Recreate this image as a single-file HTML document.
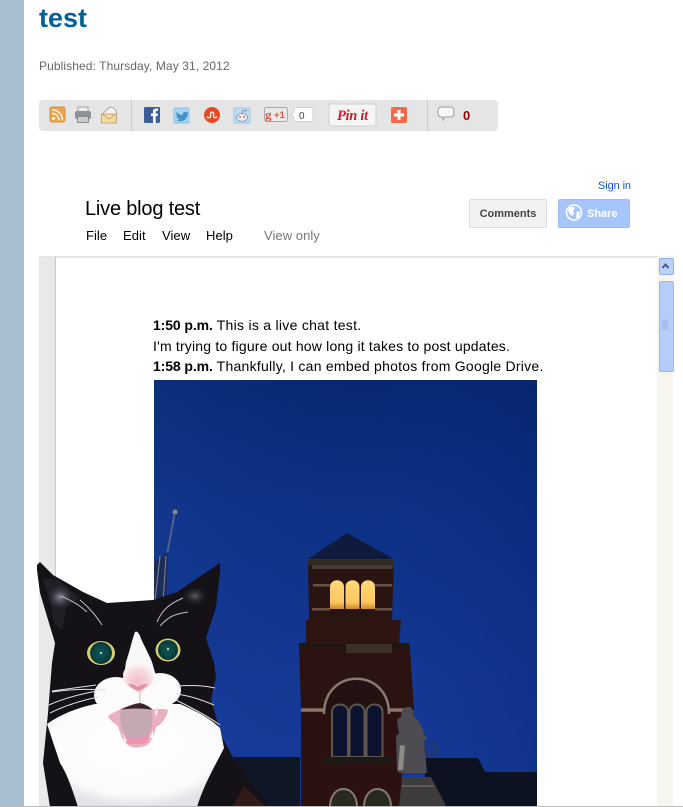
<!DOCTYPE html>
<html><head><meta charset="utf-8"><style>
html,body{margin:0;padding:0;background:#fff}
body{width:683px;height:807px;position:relative;overflow:hidden;font-family:"Liberation Sans",Arial,sans-serif}
.t{position:absolute;white-space:nowrap;line-height:1}
svg{position:absolute;left:0;top:0}
b{letter-spacing:-.1px}
</style></head><body>
<div style="position:absolute;left:0;top:0;width:24px;height:807px;background:#a7bfd0"></div>
<div class="t" style="left:39px;top:5px;font-size:27px;font-weight:bold;color:#036097">test</div>
<div class="t" style="left:39px;top:60px;font-size:12px;color:#666;letter-spacing:.09px">Published: Thursday, May 31, 2012</div>

<div style="position:absolute;left:39px;top:100px;width:459px;height:31px;background:#e5e5e5;border-radius:4px"></div>
<div style="position:absolute;left:131px;top:100px;width:1px;height:31px;background:#c8c8c8"></div>
<div style="position:absolute;left:427px;top:100px;width:1px;height:31px;background:#c8c8c8"></div>

<div class="t" style="left:85px;top:199px;font-size:20px;color:#000;letter-spacing:-.2px">Live blog test</div>
<div class="t" style="left:86px;top:229px;font-size:13px;color:#000;letter-spacing:.05px">File</div>
<div class="t" style="left:123px;top:229px;font-size:13px;color:#000;letter-spacing:.05px">Edit</div>
<div class="t" style="left:162px;top:229px;font-size:13px;color:#000;letter-spacing:.05px">View</div>
<div class="t" style="left:206px;top:229px;font-size:13px;color:#000;letter-spacing:.05px">Help</div>
<div class="t" style="left:264px;top:229px;font-size:13px;color:#777;letter-spacing:.05px">View only</div>
<div class="t" style="left:598px;top:181px;font-size:11px;color:#15c;letter-spacing:-.1px">Sign in</div>
<div style="position:absolute;left:469px;top:199px;width:76px;height:27px;background:#f2f2f2;border:1px solid #dcdcdc;border-radius:2px;text-align:center;font-size:11px;font-weight:bold;color:#444;line-height:28px">Comments</div>
<div style="position:absolute;left:558px;top:199px;width:70px;height:27px;background:#a6c5fb;border:1px solid #9dbdf5;border-radius:2px;font-size:11px;font-weight:bold;color:#fff;line-height:28px;text-indent:28px">Share</div>

<!-- doc -->
<div style="position:absolute;left:39px;top:256px;width:618px;height:2px;background:#e4e4e4"></div>
<div style="position:absolute;left:39px;top:257px;width:16px;height:550px;background:#e9e9e9;border-right:1px solid #c9c9c9"></div>
<div style="position:absolute;left:657px;top:256px;width:16px;height:551px;background:#f6f5f0"></div>
<div style="position:absolute;left:659px;top:258px;width:13px;height:15px;background:#bcd2fa;border:1px solid #8fb0ec;border-radius:2px"></div>
<div style="position:absolute;left:659px;top:281px;width:13px;height:89px;background:#b4cdf9;border:1px solid #98b7f0;border-radius:2px"></div>

<div class="t" style="left:153px;top:318px;font-size:14px;color:#000;letter-spacing:.28px"><b>1:50 p.m.</b> This is a live chat test.</div>
<div class="t" style="left:153px;top:339px;font-size:14px;color:#000;letter-spacing:.19px">I'm trying to figure out how long it takes to post updates.</div>
<div class="t" style="left:153px;top:359px;font-size:14px;color:#000;letter-spacing:.245px"><b>1:58 p.m.</b> Thankfully, I can embed photos from Google Drive.</div>

<svg width="683" height="807" viewBox="0 0 683 807">
<defs>
<linearGradient id="sky" x1="0" y1="0" x2="0" y2="1"><stop offset="0" stop-color="#082870"/><stop offset=".3" stop-color="#0d3184"/><stop offset=".7" stop-color="#143894"/><stop offset="1" stop-color="#173c98"/></linearGradient>
<linearGradient id="skyr" x1="0" y1="0" x2="1" y2="0"><stop offset="0" stop-color="#2a55b5" stop-opacity=".15"/><stop offset=".55" stop-color="#0a2f8a" stop-opacity="0"/><stop offset="1" stop-color="#04206e" stop-opacity=".3"/></linearGradient>
<radialGradient id="ear" cx=".5" cy=".5" r=".5"><stop offset="0" stop-color="#8f8a9a"/><stop offset="1" stop-color="#2a252c" stop-opacity="0"/></radialGradient>
<radialGradient id="iris" cx=".5" cy=".5" r=".5"><stop offset="0" stop-color="#0e5a5a"/><stop offset="1" stop-color="#0a3836"/></radialGradient>
<radialGradient id="fur" cx=".5" cy=".4" r=".6"><stop offset="0" stop-color="#fff"/><stop offset=".8" stop-color="#fbfbfb"/><stop offset="1" stop-color="#e2e2e8"/></radialGradient>
<radialGradient id="nose" cx=".5" cy=".6" r=".55"><stop offset="0" stop-color="#f3bccb"/><stop offset=".7" stop-color="#f8dbe0"/><stop offset="1" stop-color="#fbf3f3"/></radialGradient>
<linearGradient id="win" x1="0" y1="0" x2="0" y2="1"><stop offset="0" stop-color="#ffd77a"/><stop offset=".75" stop-color="#ffc95e"/><stop offset="1" stop-color="#d08a2c"/></linearGradient>
</defs>

<!-- toolbar icons -->
<g>
<rect x="50" y="107" width="15" height="15" rx="2" fill="#e9a24e" stroke="#d8923f"/>
<circle cx="53.500" cy="118.500" r="1.600" fill="#fff3dd"/>
<path d="M52 113.500a7 7 0 0 1 7 7M52 109.800a10.500 10.500 0 0 1 10.500 10.500" fill="none" stroke="#fff0d6" stroke-width="1.600"/>
<rect x="78" y="107" width="10" height="5" fill="#eee" stroke="#a0a0a0"/>
<rect x="75" y="111" width="16" height="8" rx="2" fill="#8c9299"/>
<rect x="77.500" y="116.500" width="11" height="6" fill="#c8cacc" stroke="#8c8c8c"/>
<path d="M101.500 115l7.500-7.500h4l3.500 4v3.500l-7 4z" fill="#f4f4f4" stroke="#aaa"/>
<rect x="101.500" y="114" width="15" height="9" fill="#f2d9a6" stroke="#c9a671"/>
<path d="M102 114l7 5 7-5" fill="none" stroke="#c9a671"/>
<rect x="144" y="107" width="16" height="16" rx="1.500" fill="#3b5d98"/>
<path d="M153 123v-7h-2v-2.500h2v-2c0-2 1.200-3 3-3h2v2.500h-1.300c-.8 0-1 .4-1 1v1.500h2.300l-.4 2.500h-1.900v7z" fill="#fff"/>
<rect x="174" y="108" width="15" height="15" rx="1.500" fill="#a9d4ef" stroke="#8fbfe0"/>
<path d="M176.500 112c2 2 4 3 6 3 0-3 3-4 4.500-2.300l1.500-.7-.8 1.700c0 4-3 7.500-7.200 7.500-1.500 0-3-.4-4-1.200 1.300 0 2.300-.4 3.200-1-1.500-.5-2.500-1-3.500-2.500l1.500-.2c-1-.8-1.800-2.300-1.200-4.300z" fill="#3f93c9"/>
<circle cx="212" cy="115" r="8" fill="#eb4924"/>
<path d="M207 116.500c.2 1.500 3.200 1.500 3.600 0v-3c.2-1.800 2.700-1.800 3 0v3c.3 1.500 2.800 1.500 3 0" fill="none" stroke="#fff" stroke-width="1.300"/>
<rect x="234" y="108" width="16" height="15" rx="1.500" fill="#bcdcf3" stroke="#a0c6e4"/>
<ellipse cx="242" cy="117.500" rx="5.500" ry="3.800" fill="#e9eef2" stroke="#7b8a96" stroke-width=".7"/>
<circle cx="240" cy="117" r=".9" fill="#d8431e"/><circle cx="244" cy="117" r=".9" fill="#d8431e"/>
<circle cx="246" cy="110.500" r="1" fill="#8397a5"/><path d="M242 114l1-3.500 3 .3" fill="none" stroke="#6b7d8a" stroke-width=".7"/>
<rect x="264.500" y="107.500" width="23" height="14" rx="2" fill="#e9e9e9" stroke="#aaa"/>
<text x="265" y="119" font-family="Liberation Serif,serif" font-size="13" font-weight="bold" fill="#d9573f">g</text>
<text x="274" y="118" font-family="Liberation Sans,sans-serif" font-size="9.500" font-weight="bold" fill="#d9573f">+1</text>
<path d="M291 114.500l3-2.500v-3.500a1 1 0 0 1 1-1h17a1 1 0 0 1 1 1v12a1 1 0 0 1-1 1h-17a1 1 0 0 1-1-1v-3.500z" fill="#fff" stroke="#d0d0d0"/>
<text x="299" y="119" font-family="Liberation Sans,sans-serif" font-size="10" fill="#444">0</text>
<rect x="329" y="104" width="47" height="22" rx="2" fill="#f6f5f5" stroke="#cfcfcf"/>
<text x="337" y="120" font-family="Liberation Serif,serif" font-size="14.500" font-style="italic" font-weight="bold" fill="#c4202e" letter-spacing="-.3">Pin it</text>
<rect x="391" y="107" width="16" height="16" rx="1.500" fill="#f26b47"/>
<path d="M399 110v10M394 115h10" stroke="#fff" stroke-width="3"/>
<path d="M441 107h10a3 3 0 0 1 3 3v4a3 3 0 0 1-3 3h-6l-2 3v-3h-2a3 3 0 0 1-3-3v-4a3 3 0 0 1 3-3z" fill="#f8f8f8" stroke="#9a9a9a"/>
<text x="463" y="120" font-family="Liberation Sans,sans-serif" font-size="13" font-weight="bold" fill="#990000">0</text>
</g>

<!-- share globe -->
<circle cx="574" cy="212.500" r="7.500" fill="#a6c5fb" stroke="#fff" stroke-width="1.500"/>
<path d="M568 209c3-3 5-3 7-1l-2 3 1 3-2 2-3-3zM577 211l3 1-1 5-3 1z" fill="#fff"/>
<!-- scrollbar glyphs -->
<path d="M662.500 268l3-3.500 3 3.500" fill="none" stroke="#3e5d90" stroke-width="2"/>
<path d="M662 321h6M662 323h6M662 325h6M662 327h6M662 329h6" stroke="#8fb0ea"/>

<!-- photo -->
<rect x="154" y="380" width="383" height="427" fill="url(#sky)"/>
<rect x="154" y="380" width="383" height="427" fill="url(#skyr)"/>
<!-- flagpole -->
<circle cx="175" cy="512" r="2.500" fill="#8c8a80"/>
<path d="M174.500 514l-7.500 41" stroke="#50608a" stroke-width="2"/>
<path d="M168 552l-2 52h-12v-42z" fill="#1d2c55"/>
<path d="M160 556l-5 44M166 556l-3 46" stroke="#6c7894" stroke-width="1.200"/>
<!-- roofs -->
<path d="M154 757h146v50H154z" fill="#0f1626"/>
<path d="M425 758h53l7 14h52v35H425z" fill="#0c1220"/>
<!-- tower -->
<path d="M347 533l-39 26h86z" fill="#101a3c"/>
<path d="M308 560h86l-2 60h-83z" fill="#2a1412"/>
<path d="M308 560h86v5h-86z" fill="#2f2a22"/>
<path d="M312 565h81v4h-81z" fill="#453a30"/>
<path d="M313 584h17v2.500h-17zM375 584h17v2.500h-17zM312 608h18v2.500h-18zM375 608h17v2.500h-17z" fill="#6a5245"/>
<path d="M306 620h95l-2 24H306z" fill="#2e1512"/>
<path d="M299 643h110l1 7 4 60H301z" fill="#2a1311"/>
<path d="M299 643h110v4H299z" fill="#1f1612"/>
<rect x="346" y="644" width="46" height="9" fill="#3b3026"/>
<path d="M301 706h100l1 101H301z" fill="#2b1211"/>
<path d="M301 710h22M390 710h14" stroke="#8a7668" stroke-width="3.500"/>
<path d="M324 714c0-47 65-47 65 0" fill="#241212" stroke="#8a7a70" stroke-width="2.500"/>
<path d="M332 757v-45c0-10 16-10 16 0v45zM349.500 757v-45c0-10 15-10 15 0v45zM366.500 757v-45c0-10 16-10 16 0v45z" fill="#0c1330" stroke="#5f564c" stroke-width="2"/>
<path d="M323 757h70v6h-70z" fill="#1d1a18"/>
<path d="M330 807c0-24 27-24 27 0z" fill="#29291f" stroke="#8a7a70" stroke-width="2"/>
<path d="M364 807c0-24 27-24 27 0z" fill="#29291f" stroke="#8a7a70" stroke-width="2"/>
<!-- windows -->
<path d="M330 609v-22c0-9 14-9 14 0v22z" fill="url(#win)"/>
<path d="M345.500 609v-22c0-9 14-9 14 0v22z" fill="url(#win)"/>
<path d="M361 609v-22c0-9 14-9 14 0v22z" fill="url(#win)"/>
<!-- statue -->
<path d="M407 707c4-1 7 2 6 7l1 3c5 3 8 10 11 19l2 3-3 2 3 32h-27l-3-2-1-36 3-1-2-14 5-4c-1-4 0-8 5-9z" fill="#4e4c50"/>
<path d="M400 745l-2 25h5l2-24z" fill="#8e8a86"/>
<circle cx="431" cy="749" r="6" fill="none" stroke="#2e3648" stroke-width="1.500"/>
<path d="M402 777h29l14 27v3h-46z" fill="#3e3c3c"/>
<path d="M402 785h32v2h-32z" fill="#5e5c5a"/>

<!-- cat -->
<path d="M37 565l3-3 13 13 30 17 24 11 46-3 24-8 43-29v10l-4 34-10 31 8 25 2 14-5 23 11 37 14 26 16 20 17 24H50l-7-44 5-50 4-50 3-20-15-50-3-23z" fill="#141217"/>
<path d="M42 578l8 22 4 24 8 6 4-22 14-10-22-18z" fill="#221e26"/>
<ellipse cx="60" cy="597" rx="14" ry="13" fill="url(#ear)"/>
<ellipse cx="195" cy="596" rx="13" ry="10" fill="url(#ear)" opacity=".6"/>
<path d="M87 612c-10-9-17-12-26-16M102 625c-6-9-12-17-22-25M157 622c5-12 12-18 26-24M160 626c8-9 14-12 28-14" fill="none" stroke="#bdbdc8" stroke-width="1"/>
<!-- chest -->
<path d="M47 724c14-10 30-16 48-20h85c14 6 30 14 40 24l4 20c-8 16-20 36-27 59H78c-4-12-10-32-18-44z" fill="url(#fur)"/>
<!-- blaze & muzzle -->
<path d="M135 632c-3 8-5 18-9 30l-2 14h32l-4-14c-4-10-10-20-12-26-2-4-3-5-5-4z" fill="#f8f8f8"/>
<ellipse cx="116" cy="695" rx="22" ry="18" fill="#fbfbfb"/>
<ellipse cx="160" cy="690" rx="21" ry="17" fill="#fbfbfb"/>
<path d="M112 680h50v30h-50z" fill="#fbfbfb"/>
<!-- nose -->
<path d="M124 671c5-11 23-11 29-1 2 6 0 13-3 16-3 1-6 4-10 8-4-4-8-7-12-8-5-3-6-11-4-15z" fill="url(#nose)"/>
<path d="M128 684c3-1 7 1 10 3 3-2 7-4 10-3-2 3-6 6-10 7-4-1-8-4-10-7z" fill="#e392a6"/>
<path d="M140 692v12" stroke="#d9b3bb" stroke-width="1"/>
<!-- mouth -->
<path d="M108 716c8-5 16-9 29-13 5 1 9 5 15 7 6-1 12-2 16 0-1 7-6 14-12 17-2 8-5 17-11 19-8 3-16 2-20-4-4-5-5-9-7-16-3-3-8-5-10-10z" fill="#eab0bf"/>
<path d="M120 712c7-4 13-5 21-5 6 1 9 3 11 5 1 6 0 12-1 18-2 5-5 9-10 9-8 1-15 0-17-5-3-6-4-14-4-22z" fill="#c4a8b2"/>
<path d="M120 710c8-4 14-6 20-7 5 1 10 4 13 7-9-2-23-2-33 0z" fill="#3a2228"/>
<path d="M124 734c6 6 18 6 25 0l-2 8c-6 3-16 3-21 0z" fill="#ed94ae"/>
<path d="M123 733l4 8-2 1zM153 730l-3 8 3 0zM155 711l1 6 2-7z" fill="#fff"/>
<!-- eyes -->
<ellipse cx="101" cy="653" rx="14.500" ry="12.500" fill="#d5ce73" stroke="#0b0b0d"/>
<circle cx="101" cy="653" r="11" fill="url(#iris)"/>
<circle cx="101" cy="653" r="1" fill="#e8f4f0"/>
<ellipse cx="168" cy="650" rx="13" ry="12" fill="#d5ce73" stroke="#0b0b0d"/>
<circle cx="168" cy="650" r="10" fill="url(#iris)"/>
<circle cx="168" cy="649" r="1" fill="#e8f4f0"/>
<!-- whiskers -->
<path d="M52 692c20-3 38-3 54-2M52 691l44-6M50 713c16-8 34-13 48-16M49 705c15-7 32-11 48-14M178 686c14-1 28 0 37 2M176 694c15 2 26 6 38 11M176 700c14 7 30 15 44 25" fill="none" stroke="#dfdfe4" stroke-width="1"/>
<path d="M244 786l22 21h-34z" fill="#3a1c1c" opacity=".8"/>
</svg>
<div style="position:absolute;left:0;top:806px;width:683px;height:1px;background:#bbb"></div>
</body></html>
